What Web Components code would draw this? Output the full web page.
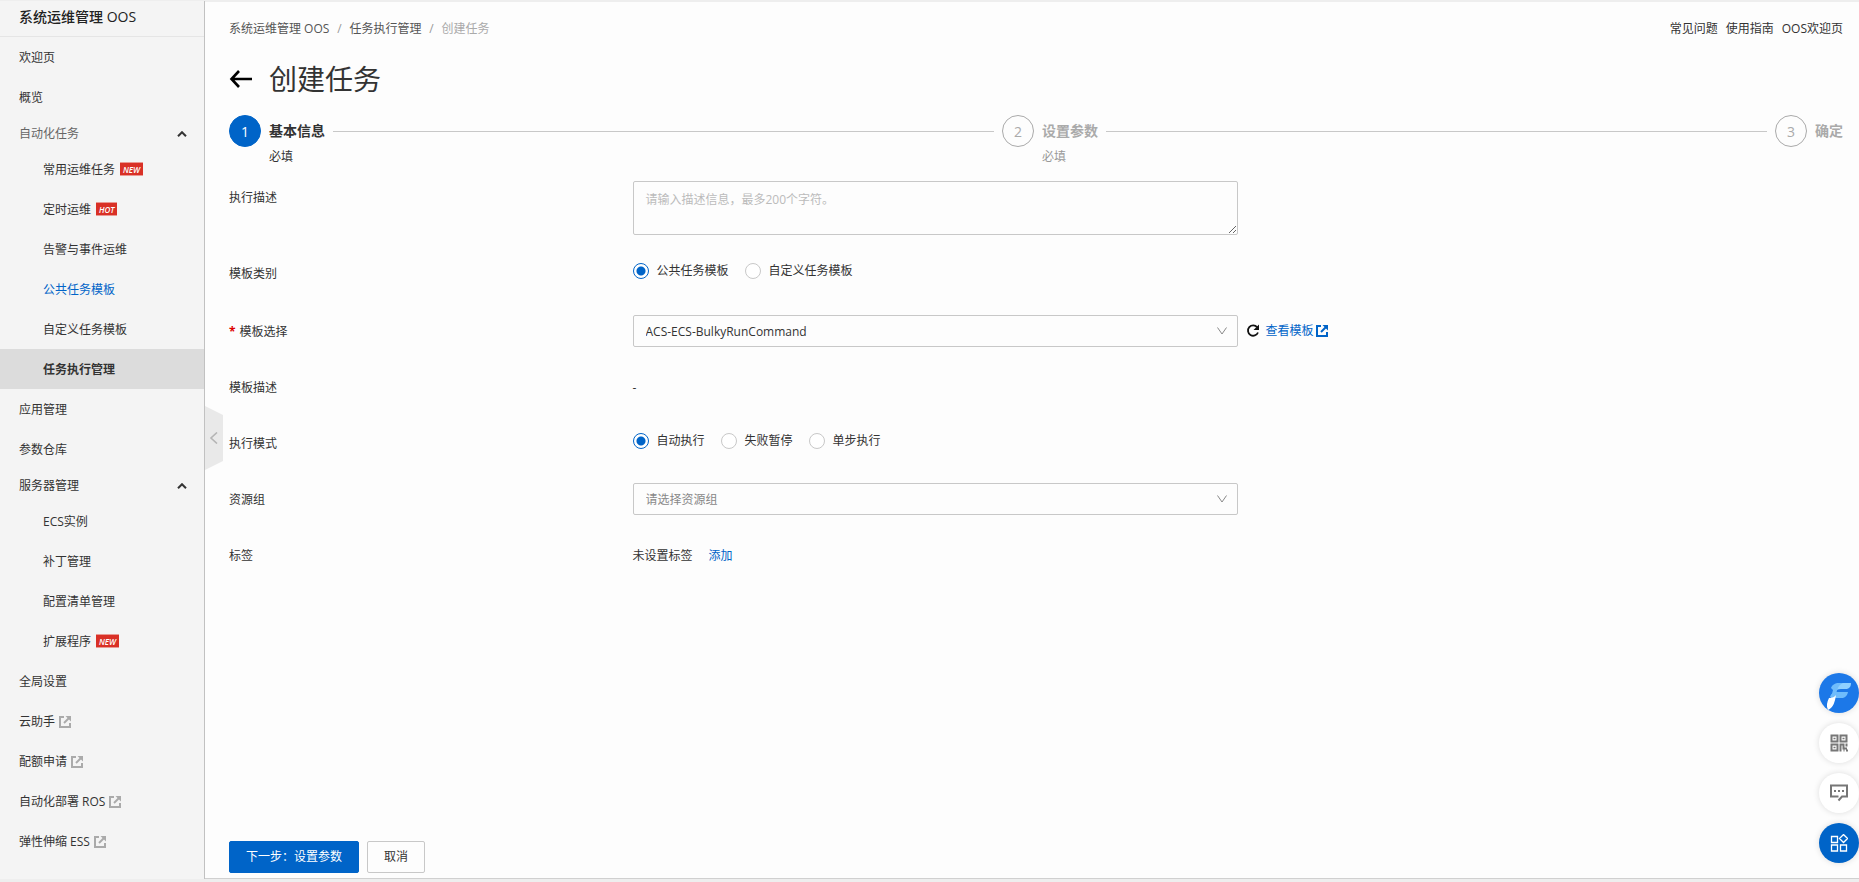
<!DOCTYPE html>
<html lang="zh-CN">
<head>
<meta charset="utf-8">
<title>创建任务 - 系统运维管理 OOS</title>
<style>
html,body{margin:0;height:100%}
body{font:12px/20px "Open Sans","Noto Sans CJK SC",sans-serif;color:#333;background:#fdfdfd}
</style>
</head>
<body>
<oos-app></oos-app>
<script>
const define = (name, html) => customElements.define(name, class extends HTMLElement {
  connectedCallback() {
    if (this.shadowRoot) return;
    const root = this.attachShadow({mode: 'open'});
    root.innerHTML = typeof html === 'function' ? html(this) : html;
  }
});

define('ext-icon', `<style>:host{display:inline-flex;flex:none;width:12px;height:12px}svg{display:block}</style>
<svg width="12" height="12" viewBox="0 0 12 12" fill="none" stroke="currentColor" stroke-width="2" aria-hidden="true">
<path d="M5 1H1v10h10V7"/><path d="M5 7l5-5"/><path d="M6.500 0H12v5.500z" fill="currentColor" stroke="none"/></svg>`);

define('nav-badge', `<style>:host{display:block;flex:none;margin:0 0 2px 5px;box-sizing:border-box;height:14px;padding:0 3px;background:#d93026;border:1px solid #e99a94;border-width:1px 0;
color:#fff;font:italic 600 8px/13px "Open Sans",sans-serif}</style><slot></slot>`);

define('nav-item', el => `<style>
:host{display:block}
a{display:flex;align-items:center;box-sizing:border-box;height:40px;padding:2px 0 0 ${el.hasAttribute('sub') ? 43 : 19}px;color:#333;text-decoration:none}
:host([current]) a{background:#dcdcdc;font-weight:700}
:host([linked]) a{color:#0064c8}
ext-icon{color:#aaa;margin-left:4px}
</style><a href="#"${el.hasAttribute('current') ? ' aria-current="page"' : ''}><slot></slot><slot name="badge"></slot>${el.hasAttribute('external') ? '<ext-icon></ext-icon>' : ''}</a>`);

define('nav-group', el => `<style>
:host{display:block}
button{display:flex;align-items:center;justify-content:space-between;width:100%;height:32px;padding:2px 17px 0 19px;border:0;background:none;font:inherit;color:${el.hasAttribute('muted') ? '#666' : '#333'}}
</style><button type="button" aria-expanded="true">${el.getAttribute('label')}
<svg width="10" height="6" viewBox="0 0 10 6" fill="none" stroke="#333" stroke-width="2"><path d="M1 5.2l4-4 4 4"/></svg></button><slot></slot>`);

define('side-nav', `<style>
:host{display:block;position:relative;box-sizing:border-box;width:205px;background:#f4f4f4;border-right:1px solid #c1c1c1}
h2{margin:0;box-sizing:border-box;height:36px;padding-left:19px;border-bottom:1px solid #e5e5e5;font-size:14px;line-height:32px;font-weight:500;color:#222}
.handle{position:absolute;left:100%;top:405px;width:18px;height:64px;padding:0;border:0;margin-left:1px;background:#e9e9e9;clip-path:polygon(0 0,100% 9px,100% 55px,0 100%)}
.handle svg{display:block;margin:auto}
</style>
<h2>系统运维管理 OOS</h2>
<nav aria-label="主导航">
<nav-item>欢迎页</nav-item><nav-item>概览</nav-item>
<nav-group label="自动化任务" muted>
<nav-item sub>常用运维任务<nav-badge slot="badge">NEW</nav-badge></nav-item>
<nav-item sub>定时运维<nav-badge slot="badge">HOT</nav-badge></nav-item>
<nav-item sub>告警与事件运维</nav-item>
<nav-item sub linked>公共任务模板</nav-item>
<nav-item sub>自定义任务模板</nav-item>
<nav-item sub current>任务执行管理</nav-item>
</nav-group>
<nav-item>应用管理</nav-item><nav-item>参数仓库</nav-item>
<nav-group label="服务器管理">
<nav-item sub>ECS实例</nav-item><nav-item sub>补丁管理</nav-item><nav-item sub>配置清单管理</nav-item>
<nav-item sub>扩展程序<nav-badge slot="badge">NEW</nav-badge></nav-item>
</nav-group>
<nav-item>全局设置</nav-item>
<nav-item external>云助手</nav-item><nav-item external>配额申请</nav-item>
<nav-item external>自动化部署 ROS</nav-item><nav-item external>弹性伸缩 ESS</nav-item>
</nav>
<button class="handle" type="button" aria-label="收起导航"><svg width="10" height="12" viewBox="0 0 10 12" fill="none" stroke="#b5b5b5" stroke-width="1.6"><path d="M8 .5L2 6l6 5.500"/></svg></button>`);

define('page-header', `<style>
:host{display:block}
.bar{display:flex;justify-content:space-between;padding-top:17px}
.crumbs,.links{display:flex}
.links{gap:8px}
a{color:#333;text-decoration:none}
.crumbs a{color:#555}
.crumbs i{font-style:normal;color:#999;width:20px;text-align:center}
.crumbs span{color:#aaa}
.title{display:flex;align-items:center;gap:16px;height:40px;margin-top:20px}
h1{margin:0;font-size:28px;line-height:42px;font-weight:400;color:#333}
button{display:flex;padding:0;border:0;background:none;width:24px}
</style>
<div class="bar"><nav class="crumbs" aria-label="面包屑"><a href="#">系统运维管理 OOS</a><i>/</i><a href="#">任务执行管理</a><i>/</i><span>创建任务</span></nav>
<div class="links"><a href="#">常见问题</a><a href="#">使用指南</a><a href="#">OOS欢迎页</a></div></div>
<div class="title"><button type="button" aria-label="返回"><svg width="24" height="18" viewBox="0 0 24 18" fill="none" stroke="#000" stroke-width="2.600"><path d="M10 1L2.500 9l7.500 8M2.500 9H23"/></svg></button><h1>创建任务</h1></div>`);

define('step-item', el => `<style>
:host{display:grid;grid-template-columns:32px auto;column-gap:8px;align-items:center;grid-template-rows:32px 20px}
:host([grow]){flex:1;grid-template-columns:32px auto 1fr}
.num{box-sizing:border-box;width:32px;height:32px;border:1px solid #aaa;border-radius:50%;text-align:center;font-size:14px;line-height:32px;color:#aaa}
b{font-size:14px;font-weight:700;color:#aaa;white-space:nowrap}
hr{width:100%;margin:0;border:0;border-top:1px solid #c8c8c8}
small{grid-column:2;font-size:12px;line-height:20px;color:#999}
:host([active]) .num{background:#0064c8;border-color:#0064c8;color:#fff}
:host([active]) b,:host([active]) small{color:#333}
</style><span class="num">${el.getAttribute('n')}</span><b><slot></slot></b>${el.hasAttribute('grow') ? '<hr>' : ''}${el.hasAttribute('note') ? `<small>${el.getAttribute('note')}</small>` : ''}`);

define('step-bar', `<style>:host{display:flex;gap:8px;margin-top:16px}</style>
<step-item n="1" note="必填" active grow>基本信息</step-item>
<step-item n="2" note="必填" grow>设置参数</step-item>
<step-item n="3">确定</step-item>`);

define('task-form', `<style>
:host{display:block;margin-top:14px}
form{display:grid;grid-template-columns:1fr 3fr}
.label{padding-top:7px;line-height:20px}
.label em{font-style:normal;font-weight:700;color:#d00;margin-right:4px}
.field{display:flex;align-items:flex-start;box-sizing:border-box;min-width:0}
.row-text{height:76px}.row-kind{height:58px;padding-top:4px}.row{height:56px}.row-mode{height:56px;padding-top:4px}
textarea{box-sizing:border-box;width:605px;max-width:100%;height:54px;padding:8px 12px;border:1px solid #c8c8c8;border-radius:2px;background:#fdfdfd;font:inherit;line-height:20px}
textarea::placeholder{color:#bbb;opacity:1}
.select{position:relative;width:605px;max-width:100%;height:32px}
select{box-sizing:border-box;appearance:none;width:100%;height:32px;padding:2px 12px 0;border:1px solid #c8c8c8;border-radius:2px;background:#fdfdfd;font:inherit;color:#333}
select.empty{color:#888}
.select svg{position:absolute;right:11px;top:12px;pointer-events:none}
.radio{display:flex;align-items:center;height:20px;margin-right:16px}
input{appearance:none;box-sizing:border-box;width:16px;height:16px;margin:0 8px 0 0;border:1px solid #c8c8c8;border-radius:50%;background:#fff}
input:checked{border-color:#0064c8;background:radial-gradient(circle,#0064c8 4px,#fff 5px)}
.view{display:flex;align-items:center;gap:2px;margin-left:6px;height:32px}
a{color:#0064c8;text-decoration:none}
.reload{display:flex;padding:0;border:0;background:none;margin-left:8px;height:32px;align-items:center}
.none{margin-right:16px}
</style>
<form>
<label class="label" for="desc">执行描述</label><div class="field row-text"><textarea id="desc" placeholder="请输入描述信息，最多200个字符。"></textarea></div>
<span class="label">模板类别</span><div class="field row-kind" role="radiogroup" aria-label="模板类别"><label class="radio"><input type="radio" name="kind" checked>公共任务模板</label><label class="radio"><input type="radio" name="kind">自定义任务模板</label></div>
<label class="label" for="tpl"><em>*</em>模板选择</label><div class="field row"><span class="select"><select id="tpl"><option>ACS-ECS-BulkyRunCommand</option></select><svg width="10" height="8" viewBox="0 0 10 8" fill="none" stroke="#888"><path d="M.5.5L5 7 9.500.5"/></svg></span>
<button class="reload" type="button" aria-label="刷新"><svg width="14" height="14" viewBox="0 0 14 14" fill="none" stroke="#111" stroke-width="1.800"><path d="M11.200 3.200A5.200 5.200 0 1 0 12 8.500"/><path d="M13 .5v5.500H7.500z" fill="#111" stroke="none"/></svg></button>
<a class="view" href="#">查看模板<ext-icon></ext-icon></a></div>
<span class="label">模板描述</span><div class="field row"><span class="label">-</span></div>
<span class="label">执行模式</span><div class="field row-mode" role="radiogroup" aria-label="执行模式"><label class="radio"><input type="radio" name="mode" checked>自动执行</label><label class="radio"><input type="radio" name="mode">失败暂停</label><label class="radio"><input type="radio" name="mode">单步执行</label></div>
<label class="label" for="group">资源组</label><div class="field row"><span class="select"><select id="group" class="empty"><option>请选择资源组</option></select><svg width="10" height="8" viewBox="0 0 10 8" fill="none" stroke="#888"><path d="M.5.5L5 7 9.500.5"/></svg></span></div>
<span class="label">标签</span><div class="field"><span class="label none">未设置标签</span><a class="label" href="#">添加</a></div>
</form>`);

define('form-actions', `<style>
:host{display:flex;gap:8px;margin-top:auto}
button{height:32px;padding:0 16px;border:1px solid #c8c8c8;border-radius:2px;background:#fdfdfd;font:inherit;color:#333}
.primary{background:#0064c8;border-color:#0064c8;color:#fff}
</style><button class="primary" type="button">下一步：设置参数</button><button type="button">取消</button>`);

define('float-tools', `<style>
:host{position:fixed;right:0;bottom:19px;display:grid;gap:10px}
button{display:flex;align-items:center;justify-content:center;width:40px;height:40px;padding:0;border:0;border-radius:50%;background:#fff;box-shadow:0 0 6px #0002}
.blue{background:#0064c8}.assist{background:#1c78e8;overflow:hidden}
</style>
<button class="assist" type="button" aria-label="智能助手"><svg width="40" height="40" viewBox="0 0 40 40"><path d="M15 18c1-5 3-8 8-8h9c0 4-2 6-6 6h-4c-3 0-5 1-7 2z" fill="#8fd0ff"/><path d="M11 24c1-4 4-5 8-5h10c-1 4-3 6-7 6h-5z" fill="#6fbcfb"/><path d="M14 17l-2-2c1-3 4-5 8-5h4c-5 2-6 7-7 12l-6 6z" fill="#6fbcfb"/><path d="M10 25c3 0 6-1 7-3-1 7-3 13-8 15-2-4-1-8 1-12z" fill="#fff"/></svg></button>
<button type="button" aria-label="二维码"><svg width="18" height="18" viewBox="0 0 18 18" fill="none" stroke="#777" stroke-width="2"><path d="M1.500 1.500h6v6h-6zM10.500 1.500h6v6h-6zM1.500 10.500h6v6h-6zM10.500 17.500v-7h3v4h3.500M16.500 9.500v3M13.500 16.500h1M16 16.500h2"/><path d="M3.500 4.500h2M12.500 4.500h2M3.500 13.500h2" stroke-width="1.500"/></svg></button>
<button type="button" aria-label="反馈"><svg width="18" height="18" viewBox="0 0 18 18" fill="none" stroke="#777" stroke-width="2"><path d="M1 1.500h16v11h-5l-3.500 4M8.500 12.500H1v-12"/><path d="M4 7h2M8 7h2M12 7h2"/></svg></button>
<button class="blue" type="button" aria-label="更多工具"><svg width="18" height="18" viewBox="0 0 18 18" fill="none" stroke="#fff" stroke-width="1.300"><path d="M1.500 2.500h6v6h-6zM1.500 11h6v6h-6zM10.500 11h6v6h-6zM13.500.5l4 4-4 4-4-4z"/></svg></button>`);

define('oos-app', `<style>
:host{display:grid;grid-template-columns:205px minmax(0,1fr);box-sizing:border-box;min-height:100vh;padding-top:1px;border-bottom:3px solid #eee;box-shadow:inset 0 2px #eee,inset 0 -1px #d0d0d0}
main{display:flex;flex-direction:column;padding:1px 16px 6px 24px}
task-form{margin-bottom:24px}
</style><side-nav></side-nav><main><page-header></page-header><step-bar></step-bar><task-form></task-form><form-actions></form-actions></main><float-tools></float-tools>`);
</script>
</body>
</html>
